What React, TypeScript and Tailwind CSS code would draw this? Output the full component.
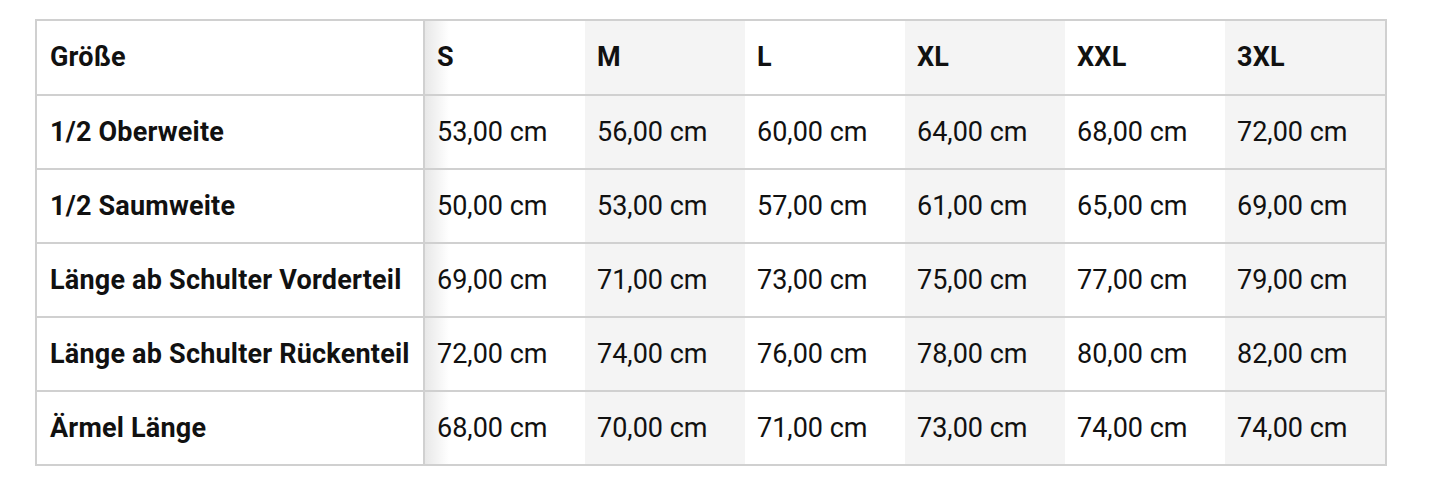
import React from "react";

const sizes = ["S", "M", "L", "XL", "XXL", "3XL"];
const rows: [string, string[]][] = [
  ["1/2 Oberweite", ["53,00", "56,00", "60,00", "64,00", "68,00", "72,00"]],
  ["1/2 Saumweite", ["50,00", "53,00", "57,00", "61,00", "65,00", "69,00"]],
  ["Länge ab Schulter Vorderteil", ["69,00", "71,00", "73,00", "75,00", "77,00", "79,00"]],
  ["Länge ab Schulter Rückenteil", ["72,00", "74,00", "76,00", "78,00", "80,00", "82,00"]],
  ["Ärmel Länge", ["68,00", "70,00", "71,00", "73,00", "74,00", "74,00"]],
];

function cellBg(i: number) {
  if (i === 0) return "bg-[linear-gradient(to_right,#e8e8e8,#ffffff_24px)]";
  return i % 2 === 1 ? "bg-[#f4f4f4]" : "bg-white";
}

export default function App() {
  return (
    <div className="w-[1454px] h-[488px] bg-white pt-[19px] pl-[35px] text-[#111] font-['Roboto',sans-serif]">
      <div className="w-[1352px] border-2 border-[#d0d0d0]">
        <div className="grid grid-cols-[388px_repeat(6,160px)] h-[75px] border-b-2 border-[#d0d0d0]">
          <div className="border-r-2 border-[#d0d0d0] flex items-center pl-[13px] text-[27px] font-bold tracking-[0.2px]">Größe</div>
          {sizes.map((s, i) => (
            <div key={s} className={`flex items-center pl-[12px] text-[27px] font-bold tracking-[0.2px] ${cellBg(i)}`}>{s}</div>
          ))}
        </div>
        {rows.map(([label, vals], r) => (
          <div
            key={label}
            className={`grid grid-cols-[388px_repeat(6,160px)] ${r < rows.length - 1 ? "h-[74px] border-b-2 border-[#d0d0d0]" : "h-[72px]"}`}
          >
            <div className="border-r-2 border-[#d0d0d0] flex items-center pl-[13px] text-[27px] font-bold tracking-[0.2px] whitespace-nowrap">{label}</div>
            {vals.map((v, i) => (
              <div key={i} className={`flex items-center pl-[12px] text-[27px] whitespace-nowrap ${cellBg(i)}`}>{v} cm</div>
            ))}
          </div>
        ))}
      </div>
    </div>
  );
}
